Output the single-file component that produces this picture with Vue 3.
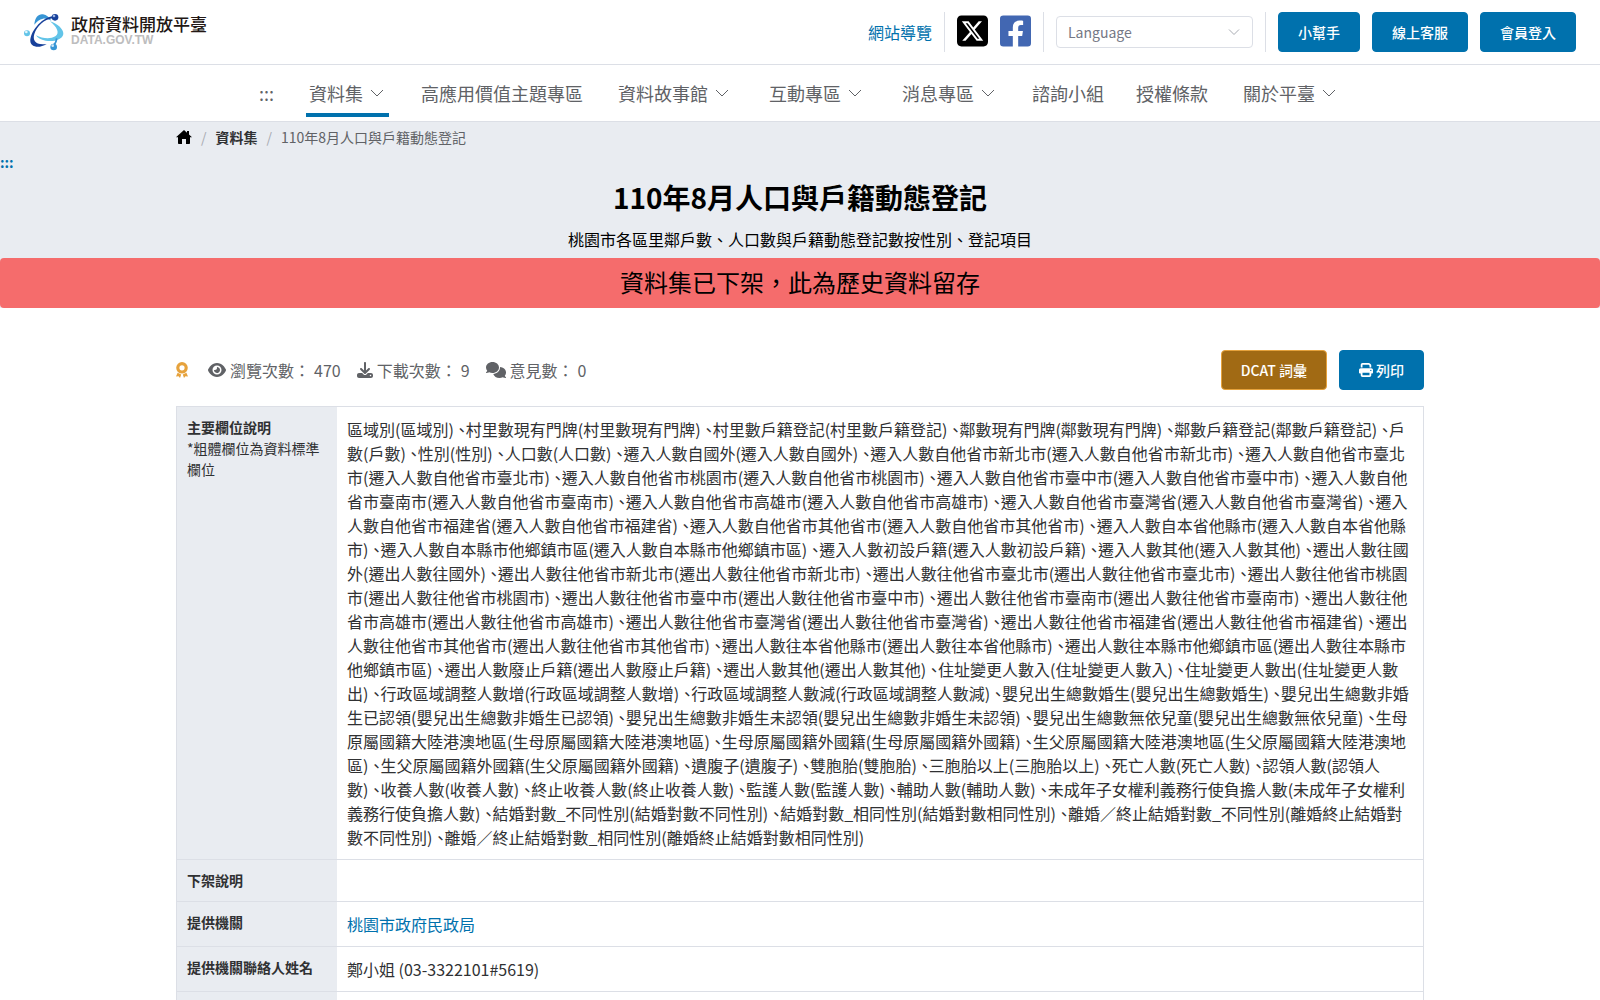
<template>
  <div class="page">
    <header>
      <div class="top-bar">
        <a class="logo" href="#">
          <svg class="logo-mark" viewBox="0 0 120 112" aria-hidden="true">
            <path d="M31 34 C33 11 44 1 57 3 C68 5 76 12 82 22 C73 17 65 15 57 16 C46 18 39 24 31 34Z" fill="#3795d5" />
            <path d="M78 24 C100 30 119 48 118 62 C115 80 88 86 65 82 C50 79 40 73 36 66 C55 76 80 78 94 69 C108 60 100 42 78 24Z" fill="#62c4e8" />
            <path d="M85 15 C61 19 39 37 31 62 C25 82 35 97 68 92 C46 106 20 102 19 84 C18 57 50 15 85 9Z" fill="#17409a" />
            <path d="M98 75 C97 84 94 91 89 95" fill="none" stroke="#3795d5" stroke-width="5" />
            <circle cx="93" cy="12" r="10" fill="#17409a" />
            <circle cx="90" cy="8" r="4" fill="#9bb5e4" />
            <circle cx="9" cy="60" r="9" fill="#62c4e8" />
            <circle cx="7" cy="56" r="4" fill="#e4f6fc" />
            <circle cx="89" cy="101" r="10" fill="#3795d5" />
            <circle cx="86" cy="97" r="4" fill="#cfe8f8" />
          </svg>
          <span class="logo-text">
            <span class="logo-name">政府資料開放平臺</span>
            <span class="logo-domain">DATA.GOV.TW</span>
          </span>
        </a>

        <div class="tools">
          <a class="link" href="#">網站導覽</a>
          <span class="divider"></span>
          <a class="social" href="#" aria-label="X">
            <svg viewBox="0 32 448 448" aria-hidden="true">
              <path d="M64 32C28.700 32 0 60.700 0 96V416c0 35.300 28.700 64 64 64H384c35.300 0 64-28.700 64-64V96c0-35.300-28.700-64-64-64H64zm297.100 84L257.300 234.600 379.400 396H283.800L209 298.100 123.300 396H75.800l111-126.900L69.700 116h98l67.700 89.500L313.600 116h47.500zM323.300 367.600L153.400 142.900H125.100L296.900 367.600h26.300z" fill="#000" />
            </svg>
          </a>
          <a class="social" href="#" aria-label="Facebook">
            <svg viewBox="0 32 448 448" aria-hidden="true">
              <path d="M400 32H48A48 48 0 0 0 0 80v352a48 48 0 0 0 48 48h137.250V327.690h-63V256h63v-54.640c0-62.150 37-96.480 93.670-96.480 27.140 0 55.520 4.840 55.520 4.840v61h-31.270c-30.810 0-40.420 19.120-40.420 38.730V256h68.780l-11 71.690h-57.780V480H400a48 48 0 0 0 48-48V80a48 48 0 0 0-48-48z" fill="#4267b2" />
            </svg>
          </a>
          <span class="divider"></span>
          <div class="language">
            <select aria-label="Language">
              <option>Language</option>
            </select>
            <svg class="language-arrow" viewBox="0 0 14 14" aria-hidden="true">
              <path d="M2 4.500l5 5 5-5" />
            </svg>
          </div>
          <span class="divider"></span>
          <button v-for="name in actions" :key="name" type="button" class="btn">{{ name }}</button>
        </div>
      </div>

      <nav class="menu">
        <a class="menu-item" href="#">:::</a>
        <a
          v-for="item in menu"
          :key="item.name"
          href="#"
          :class="['menu-item', item.sub ? 'has-sub' : '', item.active ? 'active' : '']"
        >
          {{ item.name }}
          <svg v-if="item.sub" class="menu-arrow" viewBox="0 0 14 14" aria-hidden="true">
            <path d="M1 4l6 6 6-6" />
          </svg>
        </a>
      </nav>
    </header>

    <main>
      <section class="hero">
        <div class="container breadcrumb">
          <a class="home" href="#" aria-label="首頁">
            <svg viewBox="0 0 16 14" aria-hidden="true">
              <path d="M8 0L0 7.300h2V13.200c0 .4.300.8.800.8H6V9h4v5h3.200c.5 0 .8-.4.800-.8V7.300h2L13 4.500V1h-2v1.700z" />
            </svg>
          </a>
          <span class="slash">/</span>
          <a class="crumb" href="#">資料集</a>
          <span class="slash">/</span>
          <span>110年8月人口與戶籍動態登記</span>
        </div>
        <a class="anchor" href="#">:::</a>
        <h1>110年8月人口與戶籍動態登記</h1>
        <p class="summary">桃園市各區里鄰戶數、人口數與戶籍動態登記數按性別、登記項目</p>
        <div class="notice">資料集已下架，此為歷史資料留存</div>
      </section>

      <div class="container info">
        <svg class="medal" viewBox="0 0 12 16" aria-hidden="true">
          <circle cx="6" cy="5.800" r="4.200" fill="none" stroke="#e6a23c" stroke-width="3.200" />
          <path d="M1.600 10.800L5.200 12.400 4 16l-1.400-1.700L0 14.500zM10.400 10.800L6.800 12.400 8 16l1.400-1.700 2.600.2z" fill="#e6a23c" />
        </svg>
        <span class="stat">
          <svg class="icon-eye" viewBox="0 0 576 512" aria-hidden="true">
            <path d="M288 32c-80.800 0-145.500 36.800-192.600 80.600C48.600 156 17.300 208 2.500 243.700c-3.300 7.900-3.300 16.700 0 24.600C17.300 304 48.600 356 95.400 399.400C142.500 443.200 207.200 480 288 480s145.500-36.800 192.600-80.600c46.800-43.500 78.100-95.400 93-131.100c3.300-7.900 3.300-16.700 0-24.600c-14.900-35.700-46.200-87.700-93-131.100C433.500 68.800 368.800 32 288 32zM144 256a144 144 0 1 1 288 0 144 144 0 1 1-288 0zm144-64c0 35.300-28.700 64-64 64c-7.100 0-13.900-1.200-20.300-3.300c-5.500-1.800-11.900 1.600-11.700 7.400c.3 6.900 1.300 13.800 3.200 20.700c13.700 51.200 66.400 81.600 117.600 67.900s81.600-66.400 67.900-117.600c-11.100-41.500-47.800-69.400-88.600-71.100c-5.800-.2-9.200 6.100-7.400 11.700c2.100 6.400 3.300 13.200 3.300 20.300z" />
          </svg>
          瀏覽次數：
          <span>470</span>
        </span>
        <span class="stat">
          <svg class="icon-download" viewBox="0 0 512 512" aria-hidden="true">
            <path d="M288 32c0-17.700-14.300-32-32-32s-32 14.300-32 32V274.700l-73.400-73.400c-12.500-12.500-32.800-12.500-45.300 0s-12.500 32.800 0 45.300l128 128c12.500 12.500 32.800 12.500 45.300 0l128-128c12.500-12.500 12.500-32.800 0-45.300s-32.800-12.500-45.300 0L288 274.700V32zM64 352c-35.300 0-64 28.700-64 64v32c0 35.300 28.700 64 64 64H448c35.300 0 64-28.700 64-64V416c0-35.300-28.700-64-64-64H346.500l-45.300 45.300c-25 25-65.500 25-90.500 0L165.500 352H64zm368 56a24 24 0 1 1 0 48 24 24 0 1 1 0-48z" />
          </svg>
          下載次數：
          <span>9</span>
        </span>
        <span class="stat">
          <svg class="icon-comments" viewBox="0 0 640 512" aria-hidden="true">
            <path d="M208 352c114.900 0 208-78.800 208-176S322.900 0 208 0S0 78.800 0 176c0 38.600 14.700 74.300 39.600 103.400c-3.500 9.400-8.700 17.700-14.200 24.700c-4.800 6.200-9.700 11-13.300 14.300c-1.800 1.600-3.300 2.900-4.300 3.700C1.800 327.200-.6 334.400 1.700 340.900S9.200 352 16 352c21.800 0 43.800-5.600 62.100-12.500c9.200-3.500 17.800-7.400 25.300-11.400C134.100 343.300 169.800 352 208 352zM448 176c0 112.300-99.100 196.900-216.500 207C255.800 457.400 336.400 512 432 512c38.200 0 73.900-8.700 104.700-23.900c7.500 4 16 7.900 25.200 11.400c18.300 6.900 40.300 12.500 62.100 12.500c6.900 0 13.100-4.500 15.200-11.100c2.100-6.600-.2-13.800-5.800-17.900c-.9-.7-2.400-2-4.300-3.700c-3.600-3.300-8.500-8.100-13.300-14.300c-5.500-7-10.700-15.400-14.200-24.700c24.900-29 39.600-64.700 39.600-103.400c0-92.800-84.900-168.900-192.600-175.500c.4 5.100.6 10.300.6 15.500z" />
          </svg>
          意見數：
          <span>0</span>
        </span>
        <div class="info-actions">
          <button type="button" class="btn btn-warning">DCAT 詞彙</button>
          <button type="button" class="btn">
            <svg class="icon-print" viewBox="0 0 512 512" aria-hidden="true">
              <path d="M128 0C92.700 0 64 28.700 64 64v96h64V64H354.700L384 93.300V160h64V93.300c0-17-6.700-33.300-18.700-45.300L400 18.700C388 6.700 371.700 0 354.700 0H128zM384 352v96H128V352H384zm64 32h32c17.700 0 32-14.300 32-32V256c0-35.300-28.700-64-64-64H64c-35.300 0-64 28.700-64 64v96c0 17.700 14.300 32 32 32H64v64c0 35.300 28.700 64 64 64H384c35.300 0 64-28.700 64-64V384zM432 248a24 24 0 1 1 0 48 24 24 0 1 1 0-48z" />
            </svg>
            列印
          </button>
        </div>
      </div>

      <div class="container">
        <table class="detail">
          <tbody>
            <tr>
              <th scope="row">主要欄位說明<span class="hint">*粗體欄位為資料標準欄位</span></th>
              <td class="fields">{{ fieldText }}</td>
            </tr>
            <tr>
              <th scope="row">下架說明</th>
              <td></td>
            </tr>
            <tr>
              <th scope="row">提供機關</th>
              <td><a class="link" href="#">桃園市政府民政局</a></td>
            </tr>
            <tr>
              <th scope="row">提供機關聯絡人姓名</th>
              <td>鄭小姐 (03-3322101#5619)</td>
            </tr>
            <tr>
              <th scope="row"></th>
              <td></td>
            </tr>
          </tbody>
        </table>
      </div>
    </main>
  </div>
</template>

<script setup>
import { computed } from 'vue'

const actions = ['小幫手', '線上客服', '會員登入']

const menu = [
  { name: '資料集', sub: true, active: true },
  { name: '高應用價值主題專區' },
  { name: '資料故事館', sub: true },
  { name: '互動專區', sub: true },
  { name: '消息專區', sub: true },
  { name: '諮詢小組' },
  { name: '授權條款' },
  { name: '關於平臺', sub: true }
]

const places = ['新北市', '臺北市', '桃園市', '臺中市', '臺南市', '高雄市', '臺灣省', '福建省', '其他省市']

const fields = [
  '區域別',
  '村里數現有門牌',
  '村里數戶籍登記',
  '鄰數現有門牌',
  '鄰數戶籍登記',
  '戶數',
  '性別',
  '人口數',
  '遷入人數自國外',
  ...places.map((place) => `遷入人數自他省市${place}`),
  '遷入人數自本省他縣市',
  '遷入人數自本縣市他鄉鎮市區',
  '遷入人數初設戶籍',
  '遷入人數其他',
  '遷出人數往國外',
  ...places.map((place) => `遷出人數往他省市${place}`),
  '遷出人數往本省他縣市',
  '遷出人數往本縣市他鄉鎮市區',
  '遷出人數廢止戶籍',
  '遷出人數其他',
  '住址變更人數入',
  '住址變更人數出',
  '行政區域調整人數增',
  '行政區域調整人數減',
  '嬰兒出生總數婚生',
  '嬰兒出生總數非婚生已認領',
  '嬰兒出生總數非婚生未認領',
  '嬰兒出生總數無依兒童',
  '生母原屬國籍大陸港澳地區',
  '生母原屬國籍外國籍',
  '生父原屬國籍大陸港澳地區',
  '生父原屬國籍外國籍',
  '遺腹子',
  '雙胞胎',
  '三胞胎以上',
  '死亡人數',
  '認領人數',
  '收養人數',
  '終止收養人數',
  '監護人數',
  '輔助人數',
  '未成年子女權利義務行使負擔人數',
  '結婚對數_不同性別',
  '結婚對數_相同性別',
  '離婚／終止結婚對數_不同性別',
  '離婚／終止結婚對數_相同性別'
]

// the description repeats the field name without its separators
const fieldText = computed(() => {
  return fields.map((name) => `${name}(${name.replace(/[_／]/g, '')})`).join('\u2005、')
})
</script>

<style>
body {
  background-color: #fff;
}
</style>

<style scoped>
.page {
  font-family: "Noto Sans CJK TC", sans-serif;
  font-size: 16px;
  line-height: 24px;
  color: #303133;
}
a {
  color: inherit;
  text-decoration: none;
}
.link {
  color: #0071ad;
}
.container {
  box-sizing: border-box;
  max-width: 1248px;
  margin: 0 auto;
}

.top-bar {
  display: flex;
  align-items: center;
  justify-content: space-between;
  height: 64px;
  padding: 0 24px;
  border-bottom: 1px solid #dcdfe6;
}
.logo {
  display: flex;
  align-items: center;
  gap: 7px;
}
.logo-mark {
  width: 40px;
  height: 38px;
}
.logo-text {
  display: flex;
  flex-direction: column;
  padding-bottom: 4px;
}
.logo-name {
  font-size: 17px;
  font-weight: 500;
  line-height: 20px;
  color: #231815;
}
.logo-domain {
  font-family: "Liberation Sans", sans-serif;
  font-size: 12px;
  font-weight: bold;
  line-height: 12px;
  color: #bdbdbe;
}
.tools {
  display: flex;
  align-items: center;
  gap: 12px;
}
.divider {
  width: 1px;
  height: 40px;
  background-color: #dcdfe6;
}
.social {
  display: flex;
  width: 31px;
  height: 32px;
  margin-bottom: 2px;
}
.social svg {
  width: 100%;
}
.language {
  position: relative;
}
.language select {
  display: block;
  box-sizing: border-box;
  width: 197px;
  height: 32px;
  padding: 0 32px 0 11px;
  border: 1px solid #dcdfe6;
  border-radius: 4px;
  background-color: #fff;
  appearance: none;
  font-family: inherit;
  font-size: 14px;
  color: #757885;
}
.language-arrow {
  position: absolute;
  top: 9px;
  right: 12px;
  width: 14px;
  height: 14px;
  fill: none;
  stroke: #a8abb2;
  pointer-events: none;
}
.btn {
  display: flex;
  align-items: center;
  gap: 3px;
  box-sizing: border-box;
  height: 40px;
  padding: 0 19px;
  border: 1px solid #0071ad;
  border-radius: 4px;
  background-color: #0071ad;
  color: #fff;
  font-family: inherit;
  font-size: 14px;
  font-weight: 500;
  cursor: pointer;
}
.btn-warning {
  border-color: #e6a23c;
  background-color: #a16a14;
}

.menu {
  display: flex;
  justify-content: center;
  gap: 32px;
  height: 56px;
  border-bottom: 1px solid #dcdfe6;
  font-size: 18px;
  color: #606266;
}
.menu-item {
  display: flex;
  align-items: center;
  gap: 7px;
  box-sizing: border-box;
  height: 52px;
  padding-top: 4px;
}
.has-sub {
  padding: 8px 5px 0 3px;
  border-bottom: 4px solid transparent;
}
.active {
  border-bottom-color: #0071ad;
}
.menu-arrow {
  width: 14px;
  height: 14px;
  fill: none;
  stroke: #606266;
}

.hero {
  background-color: #e9ecf1;
  text-align: center;
}
.breadcrumb {
  display: flex;
  align-items: center;
  gap: 9px;
  height: 30px;
  font-size: 14px;
  color: #606266;
}
.home {
  display: flex;
  width: 16px;
  height: 14px;
}
.home svg {
  width: 100%;
  fill: #000;
}
.slash {
  color: #a8abb2;
}
.crumb {
  font-weight: bold;
  color: #303133;
}
.anchor {
  display: block;
  font-size: 14px;
  font-weight: bold;
  line-height: 20px;
  color: #0071ad;
  text-align: left;
}
h1 {
  margin: 0;
  padding-top: 4px;
  font-size: 28px;
  line-height: 42px;
  color: #000;
}
.summary {
  margin: 0;
  padding: 9px 0 7px;
  color: #000;
}
.notice {
  padding: 6px 16px 8px;
  border-radius: 4px;
  background-color: #f56c6c;
  font-size: 24px;
  line-height: 36px;
  color: #000;
}

.info {
  display: flex;
  align-items: center;
  gap: 16px;
  padding: 42px 0 16px;
  color: #606266;
}
.medal {
  width: 12px;
  height: 16px;
  margin-right: 4px;
}
.stat {
  display: flex;
  align-items: center;
  gap: 4px;
}
.stat svg {
  height: 16px;
  fill: #606266;
}
.icon-eye {
  width: 18px;
}
.icon-download {
  width: 16px;
}
.icon-comments {
  width: 20px;
}
.icon-print {
  width: 14px;
  height: 14px;
  fill: #fff;
}
.info-actions {
  display: flex;
  gap: 12px;
  margin-left: auto;
}

.detail {
  width: 100%;
  border: 1px solid #dcdfe6;
  border-spacing: 0;
  border-bottom: 0;
  table-layout: fixed;
}
.detail th,
.detail td {
  padding: 10px;
  border-bottom: 1px solid #dcdfe6;
  text-align: left;
  vertical-align: top;
}
.detail th {
  width: 140px;
  background-color: #e9ecf1;
  font-size: 14px;
  line-height: 21px;
}
.hint {
  display: block;
  font-weight: normal;
}
/* half-width commas between the fields */
.fields {
  font-feature-settings: "halt";
}
</style>
